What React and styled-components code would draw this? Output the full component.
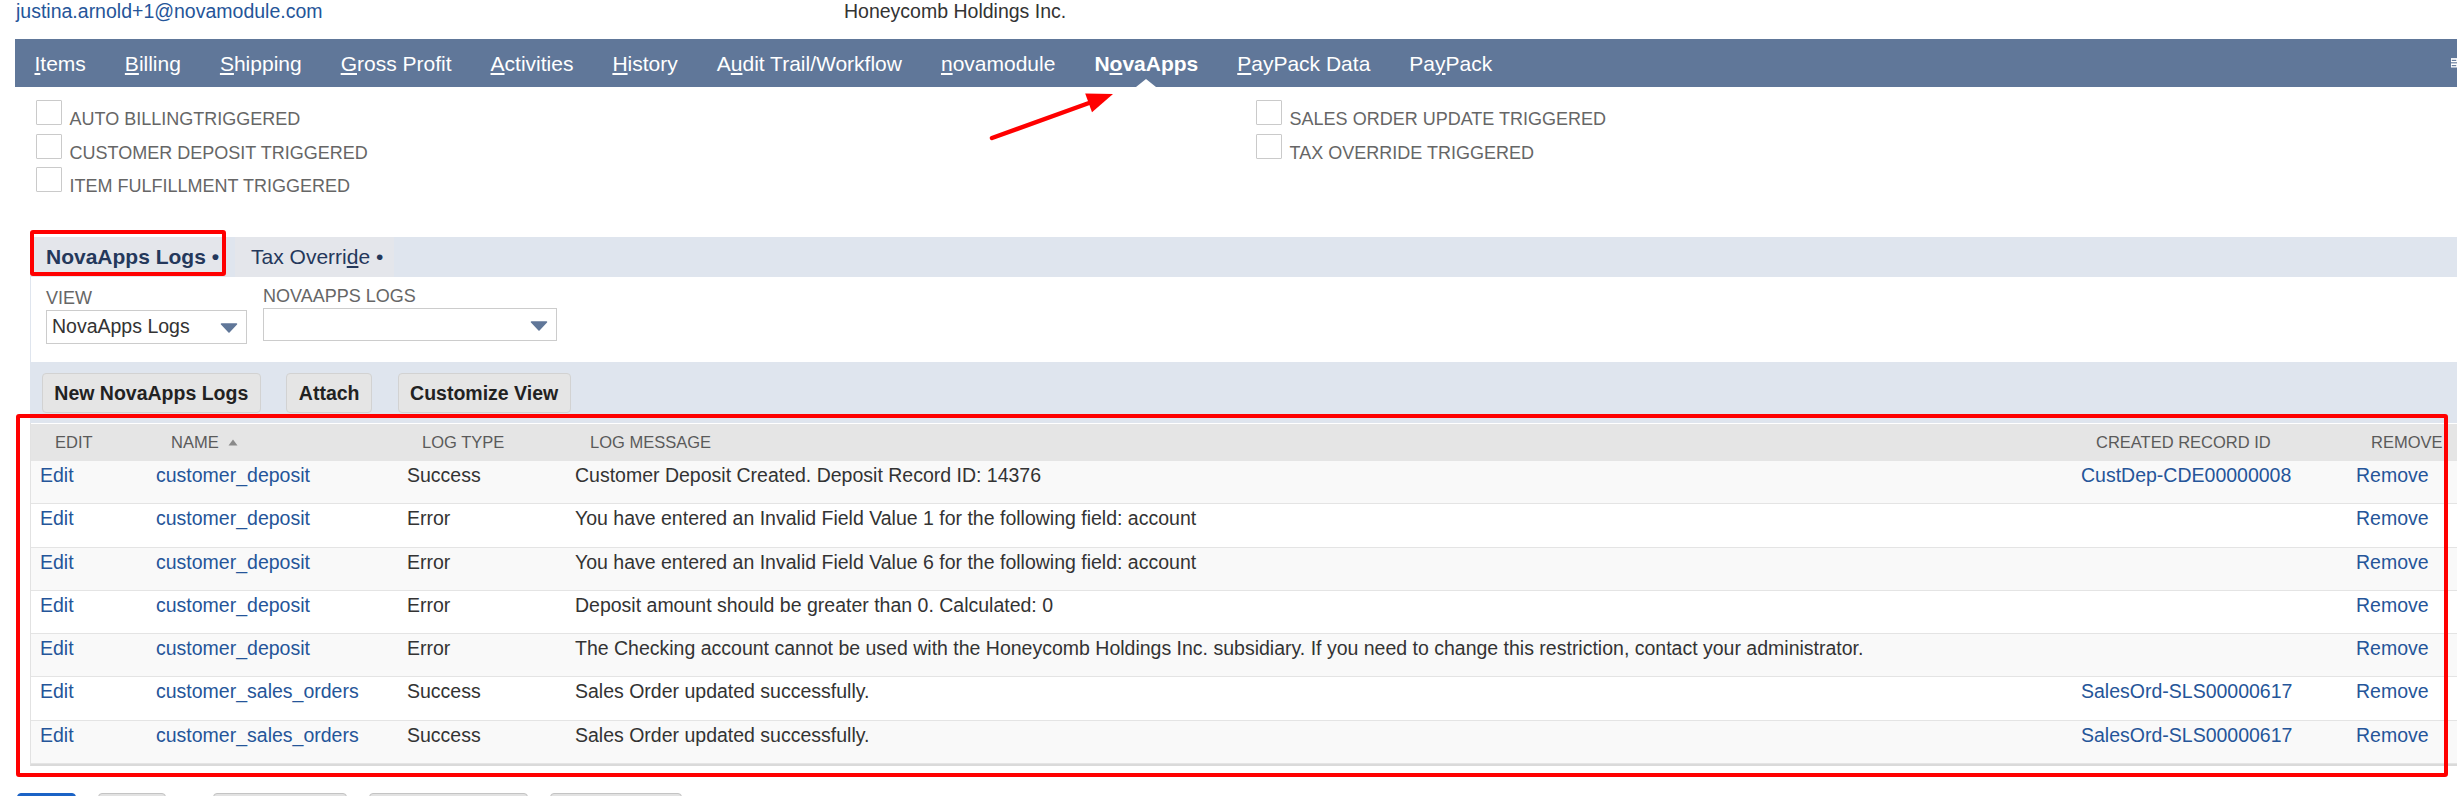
import React from "react";
import styled, { createGlobalStyle, css } from "styled-components";

const GlobalStyle = createGlobalStyle`
  html, body {
    margin: 0;
    padding: 0;
    overflow: hidden;
    background: #fff;
  }
  body {
    font-family: "Liberation Sans", Arial, sans-serif;
  }
`;

const COLS = "116px 251px 168px 1506px 275px 1fr";

const navItems = [
  ["", "I", "tems"],
  ["", "B", "illing"],
  ["", "S", "hipping"],
  ["", "G", "ross Profit"],
  ["", "A", "ctivities"],
  ["", "H", "istory"],
  ["A", "u", "dit Trail/Workflow"],
  ["", "n", "ovamodule"],
  ["N", "o", "vaApps", true],
  ["", "P", "ayPack Data"],
  ["Pa", "y", "Pack"],
];

const logs = [
  ["customer_deposit", "Success", "Customer Deposit Created. Deposit Record ID: 14376", "CustDep-CDE00000008"],
  ["customer_deposit", "Error", "You have entered an Invalid Field Value 1 for the following field: account", ""],
  ["customer_deposit", "Error", "You have entered an Invalid Field Value 6 for the following field: account", ""],
  ["customer_deposit", "Error", "Deposit amount should be greater than 0. Calculated: 0", ""],
  ["customer_deposit", "Error", "The Checking account cannot be used with the Honeycomb Holdings Inc. subsidiary. If you need to change this restriction, contact your administrator.", ""],
  ["customer_sales_orders", "Success", "Sales Order updated successfully.", "SalesOrd-SLS00000617"],
  ["customer_sales_orders", "Success", "Sales Order updated successfully.", "SalesOrd-SLS00000617"],
];

function DownArrow() {
  return (
    <svg width="18" height="10" viewBox="0 0 18 10">
      <polygon points="1.5,1 16.5,1 9,9" fill="#607799" stroke="#607799" strokeWidth="1.5" strokeLinejoin="round" />
    </svg>
  );
}

function SortArrow() {
  return (
    <svg width="10" height="7" viewBox="0 0 10 7">
      <polygon points="5,0.5 9.5,6.5 0.5,6.5" fill="#8a8a8a" />
    </svg>
  );
}

function ListIcon() {
  return (
    <svg width="16" height="26" viewBox="0 0 16 26">
      <rect x="0" y="0" width="16" height="11" fill="#fff" />
      <rect x="2" y="4.5" width="12" height="3" fill="#607799" />
      <rect x="0" y="14" width="16" height="11" fill="#fff" />
      <rect x="2" y="18.5" width="12" height="3" fill="#607799" />
    </svg>
  );
}

export default function App() {
  return (
    <>
      <GlobalStyle />
      <Page>
        <TopBar>
          <Email>justina.arnold+1@novamodule.com</Email>
          <Company>Honeycomb Holdings Inc.</Company>
        </TopBar>

        <Nav>
          {navItems.map(([pre, key, post, active]) => (
            <NavItem key={pre + key + post} $active={active}>
              {pre}<u>{key}</u>{post}
            </NavItem>
          ))}
          <NavTool>
            <ListIcon />
          </NavTool>
        </Nav>

        <Checks>
          <div>
            <CheckRow><Box />AUTO BILLINGTRIGGERED</CheckRow>
            <CheckRow><Box />CUSTOMER DEPOSIT TRIGGERED</CheckRow>
            <CheckRow><Box />ITEM FULFILLMENT TRIGGERED</CheckRow>
          </div>
          <div>
            <CheckRow><Box />SALES ORDER UPDATE TRIGGERED</CheckRow>
            <CheckRow><Box />TAX OVERRIDE TRIGGERED</CheckRow>
          </div>
        </Checks>

        <Section>
          <TabBar>
            <Tab $active>NovaApps Logs •</Tab>
            <Tab>Tax Overri<u>d</u>e •</Tab>
          </TabBar>

          <Panel>
            <Field $drop={2.7}>
              <FieldLabel>VIEW</FieldLabel>
              <Select $w={201.4}>
                NovaApps Logs
                <ArrowSlot><DownArrow /></ArrowSlot>
              </Select>
            </Field>
            <Field>
              <FieldLabel>NOVAAPPS LOGS</FieldLabel>
              <Select $w={294.5}>
                <ArrowSlot><DownArrow /></ArrowSlot>
              </Select>
            </Field>
          </Panel>

          <ButtonBar>
            <Button>New NovaApps Logs</Button>
            <Button>Attach</Button>
            <Button>Customize View</Button>
          </ButtonBar>

          <Table>
            <HeadRow>
              <HeadCell>Edit</HeadCell>
              <HeadCell>Name <SortArrow /></HeadCell>
              <HeadCell>Log Type</HeadCell>
              <HeadCell>Log Message</HeadCell>
              <HeadCell>Created Record ID</HeadCell>
              <HeadCell>Remove</HeadCell>
            </HeadRow>
            {logs.map(([name, type, message, record], i) => (
              <Row key={i} $shade={i % 2 === 0}>
                <Cell><Link>Edit</Link></Cell>
                <Cell><Link>{name}</Link></Cell>
                <Cell>{type}</Cell>
                <Cell>{message}</Cell>
                <Cell><Link>{record}</Link></Cell>
                <Cell><Link>Remove</Link></Cell>
              </Row>
            ))}
          </Table>
        </Section>

        <Footer>
          <FootButton $w={59} $primary />
          <FootButton $w={68} />
          <FootButton $w={134} $extra={25} />
          <FootButton $w={159} />
          <FootButton $w={132} />
        </Footer>

        <RedBox $x={30} $y={230} $w={196} $h={46} />
        <RedBox $x={16} $y={414} $w={2432} $h={363} />
        <Arrow width="140" height="60" viewBox="0 0 140 60">
          <line x1="7" y1="53" x2="104" y2="18" stroke="#f00" strokeWidth="4.5" strokeLinecap="round" />
          <polygon points="128,9 107,27.3 100.2,8.5" fill="#f00" />
        </Arrow>
      </Page>
    </>
  );
}

const Page = styled.div`
  position: relative;
  width: 2457px;
  height: 796px;
  overflow: hidden;
  padding-left: 15px;
  box-sizing: border-box;
`;

const TopBar = styled.div`
  display: grid;
  grid-template-columns: 828px auto;
  height: 39px;
  padding-left: 1px;
  font-size: 19.5px;
  white-space: nowrap;
`;

const Email = styled.a`
  color: #255599;
`;

const Company = styled.span`
  color: #333;
`;

const Nav = styled.nav`
  display: flex;
  height: 47.5px;
  padding-top: 2.5px;
  box-sizing: border-box;
  background: #607799;
`;

const NavItem = styled.a`
  position: relative;
  display: flex;
  align-items: center;
  padding: 0 19.5px;
  color: #fff;
  font-size: 21px;
  font-weight: ${(p) => (p.$active ? 700 : 400)};
  white-space: nowrap;
  cursor: pointer;

  u {
    text-underline-offset: 2px;
  }

  ${(p) =>
    p.$active &&
    css`
      &::after {
        content: "";
        position: absolute;
        left: 50%;
        bottom: 0;
        transform: translateX(-50%);
        border-left: 10px solid transparent;
        border-right: 10px solid transparent;
        border-bottom: 8px solid #fff;
      }
    `}
`;

const NavTool = styled.div`
  margin-left: auto;
  width: 6px;
  overflow: hidden;
  display: flex;
  align-items: center;
  margin-top: -2.5px;
`;

const Checks = styled.div`
  display: grid;
  grid-template-columns: 1220px 1fr;
  height: 150.8px;
  padding: 13.5px 0 0 21px;
  box-sizing: border-box;
`;

const CheckRow = styled.div`
  height: 33.7px;
  font-size: 18px;
  color: #666;
  white-space: nowrap;
`;

const Box = styled.span`
  display: inline-block;
  width: 26px;
  height: 25px;
  margin-right: 7.6px;
  border: 1px solid #cacaca;
  border-radius: 1px;
  box-sizing: border-box;
  vertical-align: baseline;
`;

const Section = styled.div`
  margin-left: 15px;
`;

const TabBar = styled.div`
  display: flex;
  gap: 5px;
  height: 39.4px;
  background: #dfe5ee;
`;

const Tab = styled.div`
  display: flex;
  align-items: center;
  padding: 0 11px 0 16px;
  background: #e4e6eb;
  color: #24385b;
  font-size: 21px;
  font-weight: ${(p) => (p.$active ? 700 : 400)};
  white-space: pre;

  u {
    text-underline-offset: 2px;
  }
`;

const Panel = styled.div`
  display: flex;
  align-items: flex-start;
  gap: 15.6px;
  height: 85px;
  padding: 8.9px 0 0 15px;
  border-left: 1px solid #dfe5ee;
  box-sizing: border-box;
  background: #fff;
`;

const Field = styled.div`
  padding-top: ${(p) => p.$drop || 0}px;
`;

const FieldLabel = styled.div`
  font-size: 18px;
  color: #666;
  white-space: nowrap;
`;

const Select = styled.div`
  display: flex;
  align-items: center;
  width: ${(p) => p.$w}px;
  height: 33.3px;
  margin-top: 1px;
  padding-left: 5px;
  border: 1px solid #cccccc;
  box-sizing: border-box;
  font-size: 19.5px;
  color: #333;
  white-space: nowrap;
`;

const ArrowSlot = styled.span`
  display: flex;
  margin-left: auto;
  margin-right: 8px;
  margin-top: 3px;
`;

const ButtonBar = styled.div`
  display: flex;
  align-items: flex-start;
  gap: 25.6px;
  height: 61.6px;
  padding: 11.6px 0 0 11.8px;
  box-sizing: border-box;
  background: #dfe5ee;
`;

const Button = styled.button`
  height: 40px;
  padding: 0 11.5px;
  border: 1px solid #d2d2d2;
  border-radius: 4px;
  background: #e5e5e5;
  color: #222;
  font-family: inherit;
  font-size: 19.5px;
  font-weight: 700;
  white-space: nowrap;
`;

const Table = styled.div`
  border-left: 1px solid #e2e2e2;
  border-bottom: 2px solid #dadada;
`;

const HeadRow = styled.div`
  display: grid;
  grid-template-columns: ${COLS};
  align-items: center;
  height: 37.7px;
  border-top: 1px solid #fff;
  box-sizing: border-box;
  background: #e5e5e5;
`;

const HeadCell = styled.div`
  display: flex;
  align-items: center;
  gap: 9px;
  padding-left: 24px;
  font-size: 16.5px;
  color: #5a5a5a;
  text-transform: uppercase;
  white-space: nowrap;
`;

const Row = styled.div`
  display: grid;
  grid-template-columns: ${COLS};
  height: 43.3px;
  padding-top: 3px;
  border-bottom: 1px solid #e4e4e4;
  box-sizing: border-box;
  background: ${(p) => (p.$shade ? "#f9f9f9" : "#fff")};
  font-size: 19.5px;
  color: #333;
`;

const Cell = styled.div`
  padding-left: 9px;
  white-space: nowrap;
`;

const Link = styled.a`
  color: #255599;
  cursor: pointer;
`;

const Footer = styled.div`
  display: flex;
  gap: 22px;
  margin-top: 27px;
  padding-left: 2px;
`;

const FootButton = styled.div`
  width: ${(p) => p.$w}px;
  height: 40px;
  margin-left: ${(p) => p.$extra || 0}px;
  border-radius: 4px;
  box-sizing: border-box;
  background: ${(p) => (p.$primary ? "#1b63c6" : "#e2e2e2")};
  border: 1px solid ${(p) => (p.$primary ? "#1b63c6" : "#c4c4c4")};
`;

const RedBox = styled.div`
  position: absolute;
  left: ${(p) => p.$x}px;
  top: ${(p) => p.$y}px;
  width: ${(p) => p.$w}px;
  height: ${(p) => p.$h}px;
  border: 4px solid #f00;
  border-radius: 3px;
  box-sizing: border-box;
  pointer-events: none;
`;

const Arrow = styled.svg`
  position: absolute;
  left: 985px;
  top: 85px;
  pointer-events: none;
`;
